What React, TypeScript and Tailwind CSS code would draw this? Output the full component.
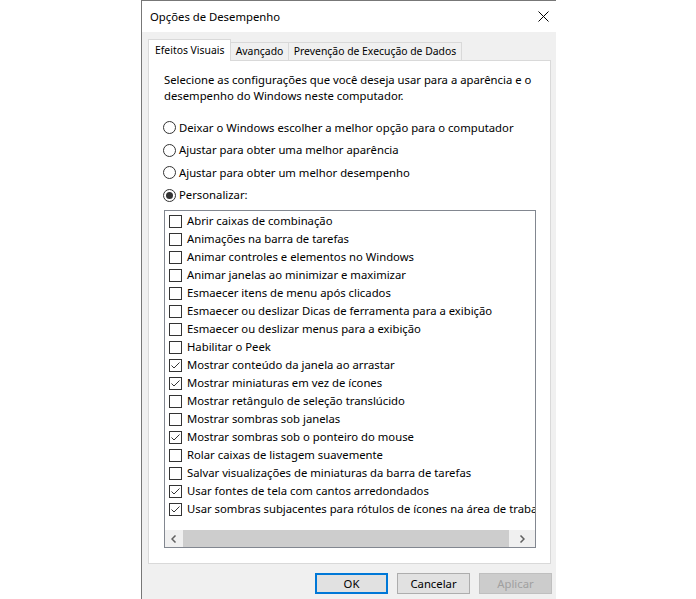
import React from "react";

const options = [
  { label: "Abrir caixas de combinação", checked: false },
  { label: "Animações na barra de tarefas", checked: false },
  { label: "Animar controles e elementos no Windows", checked: false },
  { label: "Animar janelas ao minimizar e maximizar", checked: false },
  { label: "Esmaecer itens de menu após clicados", checked: false },
  { label: "Esmaecer ou deslizar Dicas de ferramenta para a exibição", checked: false },
  { label: "Esmaecer ou deslizar menus para a exibição", checked: false },
  { label: "Habilitar o Peek", checked: false },
  { label: "Mostrar conteúdo da janela ao arrastar", checked: true },
  { label: "Mostrar miniaturas em vez de ícones", checked: true },
  { label: "Mostrar retângulo de seleção translúcido", checked: false },
  { label: "Mostrar sombras sob janelas", checked: false },
  { label: "Mostrar sombras sob o ponteiro do mouse", checked: true },
  { label: "Rolar caixas de listagem suavemente", checked: false },
  { label: "Salvar visualizações de miniaturas da barra de tarefas", checked: false },
  { label: "Usar fontes de tela com cantos arredondados", checked: true },
  { label: "Usar sombras subjacentes para rótulos de ícones na área de trabalho", checked: true },
];

const radios = [
  { label: "Deixar o Windows escolher a melhor opção para o computador", h: "h-[23px]" },
  { label: "Ajustar para obter uma melhor aparência", h: "h-[22px]" },
  { label: "Ajustar para obter um melhor desempenho", h: "h-[23px]" },
  { label: "Personalizar:", h: "h-[22px]", selected: true },
];

function CheckBox({ checked }: { checked: boolean }) {
  return (
    <div className="w-[13px] h-[13px] border border-[#333333] bg-white shrink-0 flex items-center justify-center">
      {checked && (
        <svg width="11" height="11" viewBox="0 0 11 11">
          <path d="M1.5 5.5 L4 8 L9.5 2.5" fill="none" stroke="#333333" strokeWidth="1" />
        </svg>
      )}
    </div>
  );
}

function Radio({ selected }: { selected?: boolean }) {
  return (
    <div className="w-[13px] h-[13px] rounded-full border border-[#333333] bg-white shrink-0 flex items-center justify-center">
      {selected && <div className="w-[7px] h-[7px] rounded-full bg-[#333333]" />}
    </div>
  );
}

export default function App() {
  return (
    <div className="min-h-[599px] bg-white font-['Noto_Sans',sans-serif] text-[11.3px] text-black leading-none whitespace-nowrap">
      <div className="ml-[141px] w-[415px] h-[599px] border-l border-t border-[#777777] flex flex-col">
        {/* title bar */}
        <div className="h-[31px] bg-white flex items-center justify-between pl-[8px] pr-[6px]">
          <span className="text-[11.3px] text-black">Opções de Desempenho</span>
          <svg width="11" height="11" viewBox="0 0 11 11" className="mr-[1px]">
            <path d="M0.5 0.5 L10.5 10.5 M10.5 0.5 L0.5 10.5" stroke="#000" strokeWidth="1" />
          </svg>
        </div>

        <div className="flex-1 bg-[#f0f0f0] flex flex-col pl-[6px] pr-[6px]">
          {/* tabs */}
          <div className="flex items-end mt-[7px] h-[22px] relative z-10 text-[10.4px]">
            <div className="h-[22px] w-[83px] bg-white border-l border-t border-r border-[#d9d9d9] flex items-center pl-[6px] pb-[1px]">
              Efeitos Visuais
            </div>
            <div className="h-[19px] w-[58px] border-t border-r border-b border-[#d9d9d9] flex items-center justify-center">
              Avançado
            </div>
            <div className="h-[19px] w-[173px] border-t border-r border-b border-[#d9d9d9] flex items-center justify-center">
              Prevenção de Execução de Dados
            </div>
          </div>

          {/* panel */}
          <div className="-mt-[1px] h-[504px] w-[403px] bg-white border border-[#d9d9d9] flex flex-col pl-[15px]">
            <div className="mt-[11px] leading-[16px]">
              <p>Selecione as configurações que você deseja usar para a aparência e o</p>
              <p>desempenho do Windows neste computador.</p>
            </div>

            <div className="mt-[12px] flex flex-col">
              {radios.map((r) => (
                <div key={r.label} className={`${r.h} flex items-center gap-[3px] -ml-[1px]`}>
                  <Radio selected={r.selected} />
                  <span>{r.label}</span>
                </div>
              ))}
            </div>

            <div className="mt-[4px] w-[372px] h-[338px] border border-[#828790] bg-white flex flex-col">
              <div className="flex-1 overflow-hidden pt-[1px]">
                {options.map((o) => (
                  <div key={o.label} className="h-[18px] flex items-center pl-[4px] gap-[5px]">
                    <CheckBox checked={o.checked} />
                    <span>{o.label}</span>
                  </div>
                ))}
              </div>
              {/* horizontal scrollbar */}
              <div className="h-[17px] bg-[#f0f0f0] flex items-center">
                <div className="w-[17px] h-[17px] flex items-center justify-center">
                  <svg width="6" height="8" viewBox="0 0 6 8">
                    <path d="M4.5 0.5 L1 4 L4.5 7.5" fill="none" stroke="#606060" strokeWidth="1.5" />
                  </svg>
                </div>
                <div className="h-[17px] w-[326px] bg-[#cdcdcd] ml-[1px]" />
                <div className="flex-1 h-[17px] flex items-center justify-center">
                  <svg width="6" height="8" viewBox="0 0 6 8">
                    <path d="M1.5 0.5 L5 4 L1.5 7.5" fill="none" stroke="#606060" strokeWidth="1.5" />
                  </svg>
                </div>
              </div>
            </div>
          </div>

          {/* buttons */}
          <div className="mt-[9px] flex justify-end gap-[9px] -mr-[2px]">
            <button className="w-[73px] h-[21px] bg-[#e1e1e1] border-2 border-[#0078d7] flex items-center justify-center">
              OK
            </button>
            <button className="w-[73px] h-[21px] bg-[#e1e1e1] border border-[#adadad] flex items-center justify-center">
              Cancelar
            </button>
            <button className="w-[73px] h-[21px] bg-[#cccccc] border border-[#bfbfbf] text-[#a0a0a0] flex items-center justify-center">
              Aplicar
            </button>
          </div>
        </div>
      </div>
    </div>
  );
}
